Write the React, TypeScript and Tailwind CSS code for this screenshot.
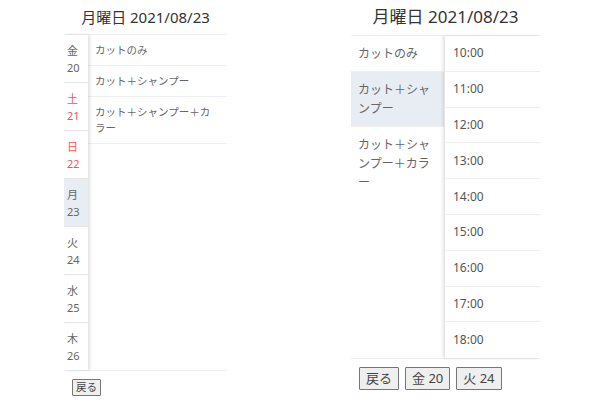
import React from 'react';

const days = [
  { w: '金', d: 20, red: false, active: false },
  { w: '土', d: 21, red: true, active: false },
  { w: '日', d: 22, red: true, active: false },
  { w: '月', d: 23, red: false, active: true },
  { w: '火', d: 24, red: false, active: false },
  { w: '水', d: 25, red: false, active: false },
  { w: '木', d: 26, red: false, active: false },
];

const menus = ['カットのみ', 'カット＋シャンプー', 'カット＋シャンプー＋カラー'];
const slots = ['10:00', '11:00', '12:00', '13:00', '14:00', '15:00', '16:00', '17:00', '18:00'];

const font = { fontFamily: '"Noto Sans", "Noto Sans CJK JP", sans-serif' };

// Left panel: day picker + menu list
const DayPanel: React.FC = () => (
  <div className="w-[163px] flex flex-col">
    <div className="h-[34px] flex items-center justify-center text-[15px] text-[#333]">月曜日 2021/08/23</div>
    <div className="flex border-t border-b border-[#eee] h-[337px]">
      <div className="w-[24px] relative z-10 shadow-[2px_0_3px_rgba(0,0,0,0.12)] flex flex-col">
        {days.map((d, i) => (
          <div
            key={d.d}
            className={`h-[48px] px-[3px] py-[7px] text-[11px] leading-[17px] ${i < days.length - 1 ? 'border-b border-[#e6e6e6]' : ''} ${d.active ? 'bg-[#e8ecf3]' : ''} ${d.red ? 'text-[#f25560]' : 'text-[#666]'}`}
          >
            <div>{d.w}</div>
            <div>{d.d}</div>
          </div>
        ))}
      </div>
      <div className="flex-1 flex flex-col">
        {menus.map((m) => (
          <div key={m} className="px-[7px] py-[7px] text-[10.5px] leading-[16px] text-[#666] border-b border-[#eee]">
            {m}
          </div>
        ))}
      </div>
    </div>
    <div className="flex pl-[8px] pt-[8px]">
      <button className="h-[17px] px-[3px] text-[10.5px] leading-[13px] text-[#444] bg-[#efefef] border border-[#767676] rounded-[1px]">戻る</button>
    </div>
  </div>
);

// Right panel: menu list + time slots
const TimePanel: React.FC = () => (
  <div className="w-[189px] flex flex-col">
    <div className="h-[35px] flex items-center justify-center text-[17px] text-[#333] pb-[2px]">月曜日 2021/08/23</div>
    <div className="flex border-t border-b border-[#eee]">
      <div className="w-[93px] flex flex-col">
        {menus.map((m, i) => (
          <div
            key={m}
            className={`px-[7px] py-[8px] text-[12px] leading-[19px] text-[#666] ${i < menus.length - 1 ? 'border-b border-[#eee]' : ''} ${i === 1 ? 'bg-[#e8ecf3]' : ''}`}
          >
            {m}
          </div>
        ))}
      </div>
      <div className="flex-1 relative z-10 shadow-[-2px_0_3px_rgba(0,0,0,0.12)] ml-[1px] bg-white flex flex-col">
        {slots.map((s, i) => (
          <div
            key={s}
            className={`h-[35.8px] flex items-center pl-[8px] text-[12px] text-[#555] ${i < slots.length - 1 ? 'border-b border-[#eee]' : ''}`}
          >
            {s}
          </div>
        ))}
      </div>
    </div>
    <div className="flex gap-[6px] pl-[8px] pt-[8px]">
      <button className="h-[23px] px-[6px] text-[13px] text-[#444] bg-[#efefef] border border-[#767676] rounded-[1px]">戻る</button>
      <button className="h-[23px] px-[6px] text-[13px] text-[#444] bg-[#efefef] border border-[#767676] rounded-[1px]">金 20</button>
      <button className="h-[23px] px-[6px] text-[13px] text-[#444] bg-[#efefef] border border-[#767676] rounded-[1px]">火 24</button>
    </div>
  </div>
);

export default function App() {
  return (
    <div className="w-[600px] h-[400px] bg-white flex" style={font}>
      <div className="ml-[64px]">
        <DayPanel />
      </div>
      <div className="ml-[124px]">
        <TimePanel />
      </div>
    </div>
  );
}
